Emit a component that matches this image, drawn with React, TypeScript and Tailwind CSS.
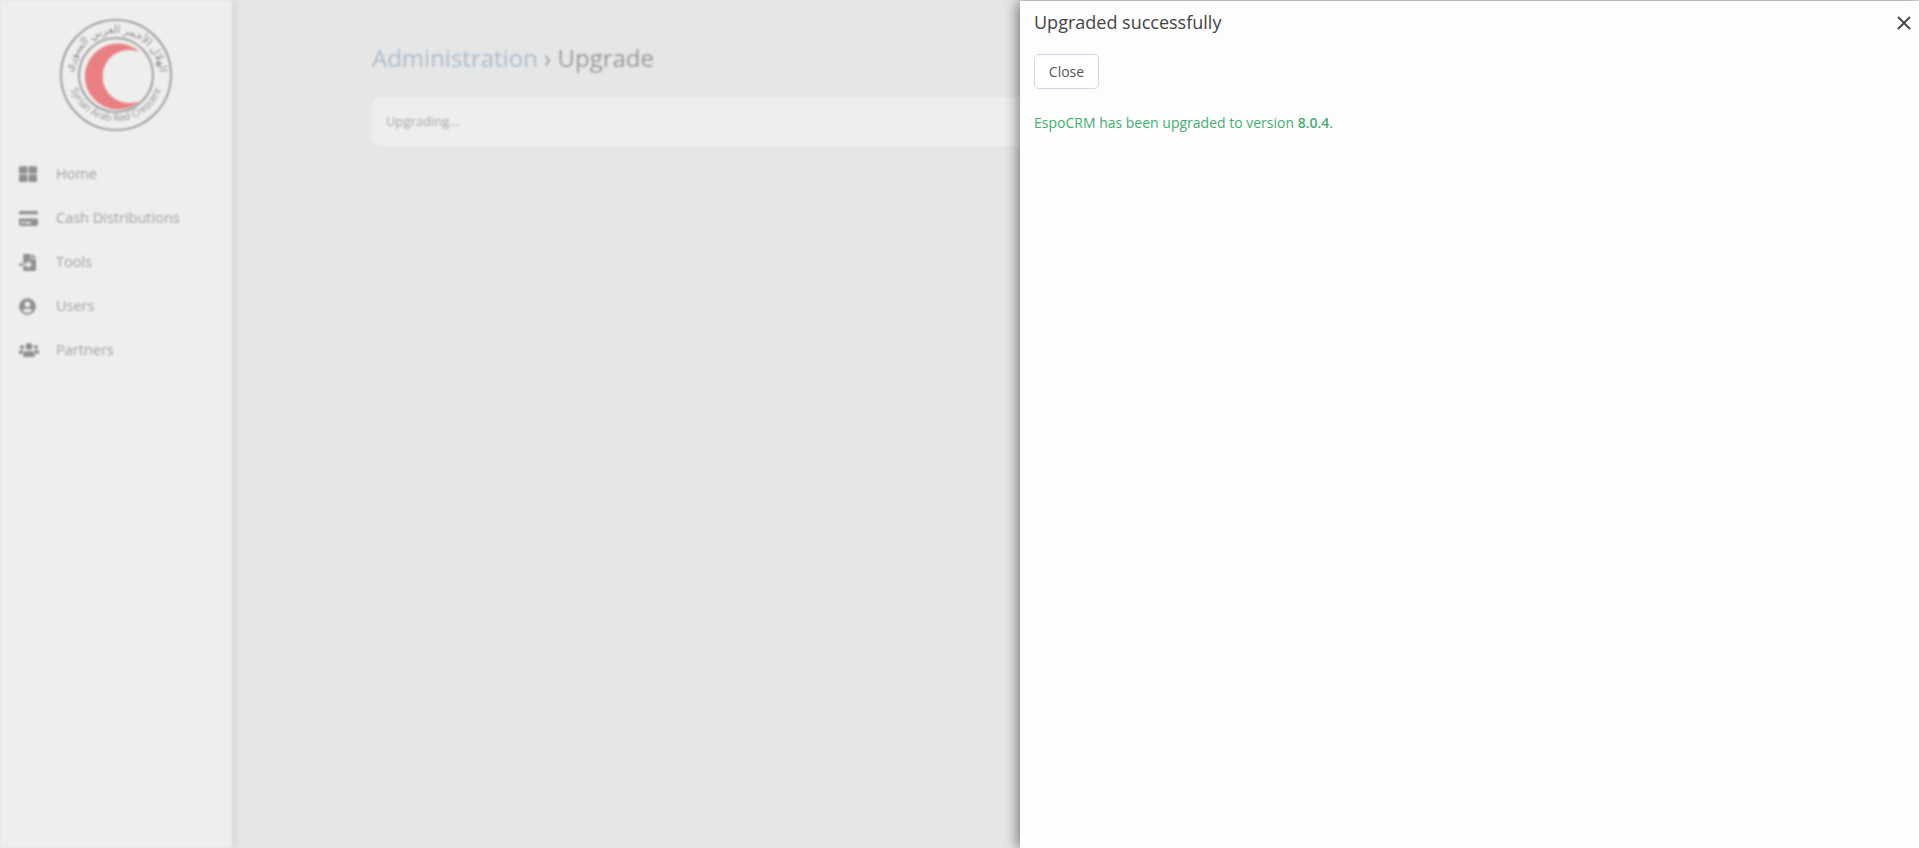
import { FaCreditCard, FaFileImport, FaThLarge, FaUserCircle, FaUsers } from 'react-icons/fa'

const navItems = [
  { label: 'Home', icon: FaThLarge, size: 'text-[18px]' },
  { label: 'Cash Distributions', icon: FaCreditCard, size: 'text-[19px]' },
  { label: 'Tools', icon: FaFileImport, size: 'text-[17px]' },
  { label: 'Users', icon: FaUserCircle, size: 'text-[17px]' },
  { label: 'Partners', icon: FaUsers, size: 'text-[20px]' },
]

function Logo() {
  return (
    <svg width="114" height="116" viewBox="0 0 114 116" className="block">
      <defs>
        <path id="top-arc" d="M 13 60 A 44 44 0 0 1 101 60" />
        <path id="bottom-arc" d="M 10 66 A 48 48 0 0 0 104 66" />
      </defs>
      <circle cx="57" cy="58" r="55" fill="none" stroke="#8c8c8c" strokeWidth="1.6" />
      <circle cx="57" cy="58" r="37" fill="none" stroke="#8c8c8c" strokeWidth="1.6" />
      <path
        d="M 79 34 A 32.5 32.5 0 1 0 79 85 A 27 27 0 1 1 79 34 Z"
        fill="#e97f82"
        stroke="#e97f82"
        strokeWidth="1"
      />
      <text
        fill="#8a8a8a"
        fontSize="11"
        fontFamily="'Noto Sans', 'DejaVu Sans', sans-serif"
        direction="rtl"
      >
        <textPath href="#top-arc" startOffset="50%" textAnchor="middle">
          الهلال الأحمر العربي السوري
        </textPath>
      </text>
      <text fill="#8f8f8f" fontSize="10" fontFamily="'Open Sans', sans-serif">
        <textPath href="#bottom-arc" startOffset="50%" textAnchor="middle">
          Syrian Arab Red Crescent
        </textPath>
      </text>
    </svg>
  )
}

export default function App() {
  return (
    <div className="relative h-[848px] w-full overflow-hidden bg-[#e6e6e6] font-['Open_Sans',sans-serif]">
      {/* BLURRED PAGE BEHIND THE PANEL */}
      <div className="flex h-full blur-[1.2px]">
        <aside className="flex h-full w-[232px] shrink-0 flex-col bg-[#eeeeee] shadow-[2px_0_8px_rgba(0,0,0,0.1)]">
          <div className="flex justify-center pt-[17px] pl-[-1px]">
            <Logo />
          </div>
          <nav className="mt-[19px] flex flex-col">
            {navItems.map((item) => (
              <div key={item.label} className="flex h-11 items-center">
                <span className="flex w-[56px] shrink-0 justify-start pl-[19px] text-[#8f8f8f]">
                  <item.icon className={item.size} />
                </span>
                <span className="text-[14.5px] text-[#a0a0a0]">{item.label}</span>
              </div>
            ))}
          </nav>
        </aside>
        <main className="min-w-0 flex-1 pt-[41px] pl-[140px]">
          <h1 className="text-[24px] leading-[34px] font-normal text-[#9a9a9a]">
            <span className="text-[#adbccb]">Administration</span> › Upgrade
          </h1>
          <div className="mt-[22px] flex h-[49px] items-center rounded-lg bg-[#eeeeee] px-[14px] text-[13px] text-[#a6a6a6]">
            Upgrading...
          </div>
        </main>
      </div>

      {/* UPGRADE RESULT PANEL */}
      <section className="absolute top-px right-0 bottom-0 w-[899px] bg-[#fdfdfd] px-[14px] shadow-[-3px_0_12px_rgba(0,0,0,0.45)]">
        <div className="flex h-[43px] items-center justify-between">
          <h2 className="text-[18px] font-normal text-[#444444]">Upgraded successfully</h2>
          <button className="mr-[-6px] text-[#444444]" aria-label="Close">
            <svg width="14" height="14" viewBox="0 0 14 14" className="block">
              <path d="M1 1 L13 13 M13 1 L1 13" stroke="currentColor" strokeWidth="1.8" fill="none" />
            </svg>
          </button>
        </div>
        <button className="mt-[10px] block h-[35px] w-[65px] rounded-[5px] border border-[#d4d4e6] bg-white text-[14px] text-[#555555]">
          Close
        </button>
        <p className="mt-[24px] text-[14px] leading-[20px] text-[#43ad6e]">
          EspoCRM has been upgraded to version <b className="font-semibold">8.0.4</b>.
        </p>
      </section>
    </div>
  )
}
